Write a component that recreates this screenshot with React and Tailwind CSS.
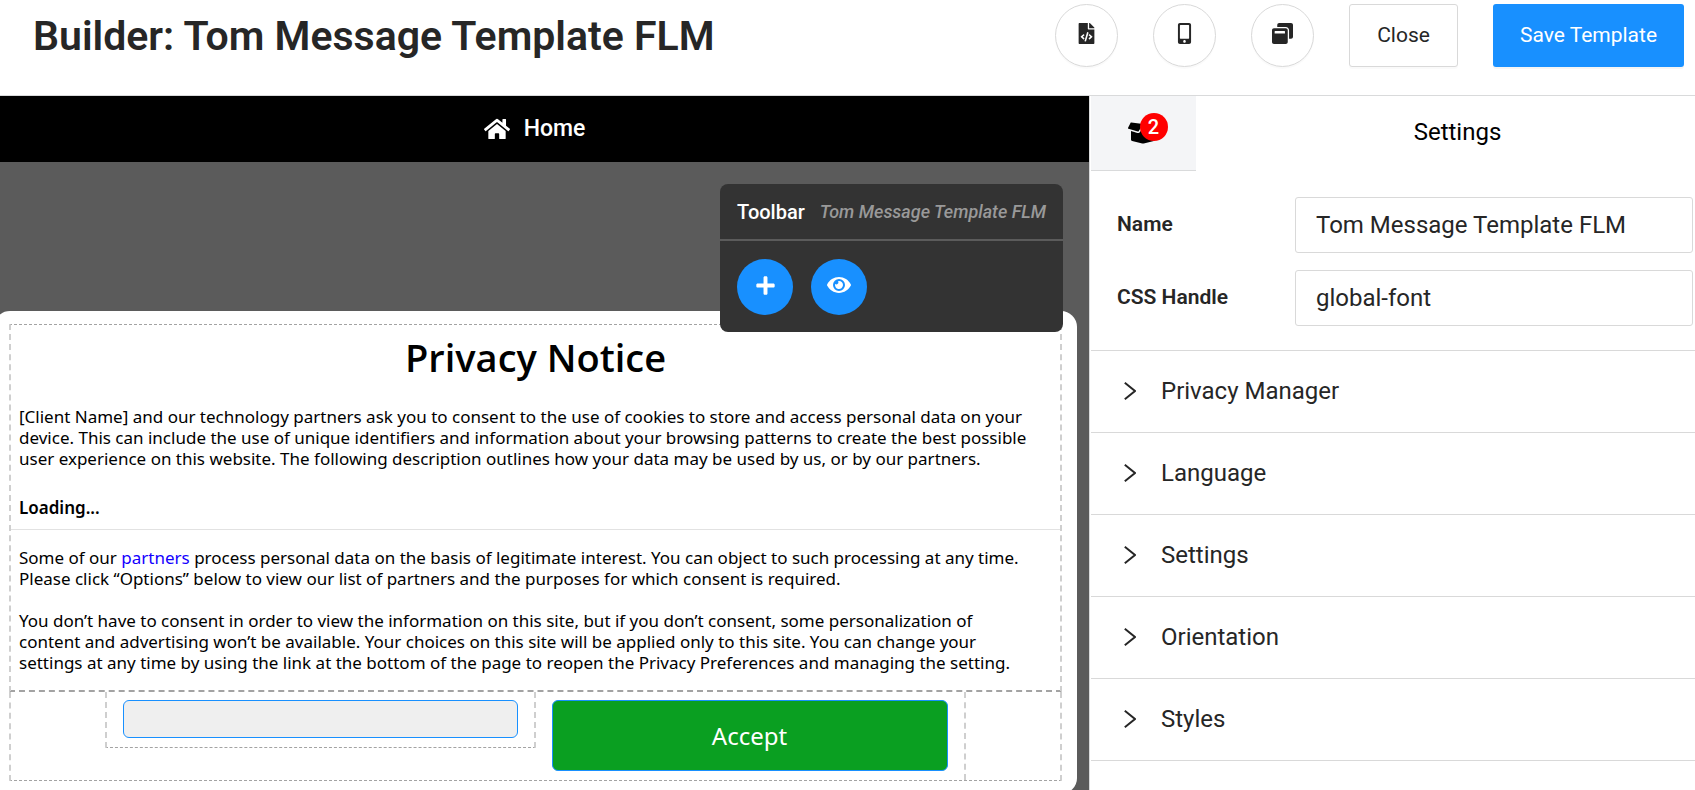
import React from 'react';
import { FaBoxOpen, FaEye, FaFileCode, FaHome, FaMobileAlt, FaPlus, FaWindowRestore } from 'react-icons/fa';

const NAME = 'Tom Message Template FLM';
const SECTIONS = ['Privacy Manager', 'Language', 'Settings', 'Orientation', 'Styles'];

function RoundButton({ label, children }) {
  return (
    <button
      type="button"
      aria-label={label}
      className="flex size-[63px] items-center justify-center rounded-full border border-[#d9d9d9] bg-white pb-1 text-[21px] shadow-[0_2px_0_rgba(0,0,0,0.02)]"
    >
      {children}
    </button>
  );
}

function Header() {
  return (
    <header className="flex items-center justify-between border-b border-[#d9dadb] bg-white pt-1 pr-[11px] pb-7 pl-[33px]">
      <h1 className="text-[41px] leading-[48px] font-semibold">Builder: {NAME}</h1>
      <div className="flex items-center gap-[35px]">
        <RoundButton label="View code"><FaFileCode /></RoundButton>
        <RoundButton label="Mobile preview"><FaMobileAlt /></RoundButton>
        <RoundButton label="Windows"><FaWindowRestore /></RoundButton>
        <button
          type="button"
          className="h-[63px] w-[109px] rounded-[3px] border border-[#d9d9d9] bg-white text-[21px] shadow-[0_2px_0_rgba(0,0,0,0.02)]"
        >
          Close
        </button>
        <button
          type="button"
          className="h-[63px] w-[191px] rounded-[3px] bg-[#1890ff] text-[21px] text-white shadow-[0_2px_0_rgba(0,0,0,0.04)]"
        >
          Save Template
        </button>
      </div>
    </header>
  );
}

function Toolbar() {
  return (
    <div className="absolute top-[22px] right-[26px] overflow-hidden rounded-lg bg-[#333333] text-white">
      <div className="flex h-[57px] items-center gap-[15px] border-b-2 border-[#5b5b5b] px-[17px]">
        <span className="text-[20px] font-medium">Toolbar</span>
        <span className="text-[18px] font-medium text-[#999999] italic">{NAME}</span>
      </div>
      <div className="flex gap-[18px] px-[17px] pt-[18px] pb-[17px]">
        <button type="button" aria-label="Add" className="flex size-14 items-center justify-center rounded-full bg-[#1890ff] pb-1 text-[21px]">
          <FaPlus />
        </button>
        <button type="button" aria-label="Preview" className="flex size-14 items-center justify-center rounded-full bg-[#1890ff] pb-1 text-[24px]">
          <FaEye />
        </button>
      </div>
    </div>
  );
}

function Message() {
  return (
    <div className="mt-[149px] mr-3 -ml-1.5 rounded-2xl bg-white px-[15px] py-[13px] font-['Noto_Sans','Open_Sans',sans-serif] text-[17px] leading-[21px] text-black">
      <section className="border-x-2 border-t border-b-2 border-dashed border-x-[#cfcfcf] border-y-[#a3a3a3] pt-2 pb-[17px]">
        <h2 className="text-center font-['Open_Sans',sans-serif] text-[38px] leading-[48px] font-semibold">Privacy Notice</h2>
        <p className="mt-[25px] px-2">
          [Client Name] and our technology partners ask you to consent to the use of cookies to store and access personal
          data on your device. This can include the use of unique identifiers and information about your browsing
          patterns to create the best possible user experience on this website. The following description outlines how
          your data may be used by us, or by our partners.
        </p>
        <p className="mt-7 border-b border-[#e2e2e2] px-2 pb-[11px] font-semibold">Loading...</p>
        <p className="mt-[17px] px-2">
          Some of our <a href="#partners" className="text-[#1400ff]">partners</a> process personal data on the basis of
          legitimate interest. You can object to such processing at any time. Please click “Options” below to view our
          list of partners and the purposes for which consent is required.
        </p>
        <p className="mt-[21px] pr-9 pl-2">
          You don’t have to consent in order to view the information on this site, but if you don’t consent, some
          personalization of content and advertising won’t be available. Your choices on this site will be applied only
          to this site. You can change your settings at any time by using the link at the bottom of the page to reopen
          the Privacy Preferences and managing the setting.
        </p>
      </section>
      <section className="flex items-start justify-center border-x-2 border-b border-dashed border-x-[#cfcfcf] border-y-[#a3a3a3]">
        <div className="w-[41%] border-x-2 border-b border-dashed border-x-[#cfcfcf] border-y-[#a3a3a3] px-4 pt-2 pb-[9px]">
          <button type="button" aria-label="Options" className="block h-[38px] w-full rounded-md border border-[#1890ff] bg-[#efefef]" />
        </div>
        <div className="w-[41%] border-r-2 border-dashed border-[#cfcfcf] px-4 pt-2 pb-[9px]">
          <button type="button" className="block h-[71px] w-full rounded-md border border-[#1890ff] bg-[#0a9f21] text-[24px] text-white">
            Accept
          </button>
        </div>
      </section>
    </div>
  );
}

function Field({ id, label, value }) {
  return (
    <div className="flex items-center">
      <label htmlFor={id} className="w-[178px] shrink-0 text-[21px] font-semibold">{label}</label>
      <input
        id={id}
        type="text"
        defaultValue={value}
        className="h-14 min-w-0 flex-1 rounded-[3px] border border-[#d9d9d9] bg-white px-5 text-[24px]"
      />
    </div>
  );
}

function SettingsPanel() {
  return (
    <aside className="w-[606px] shrink-0 border-l border-[#d9dadb] bg-white pl-px">
      <div className="flex">
        <button
          type="button"
          aria-label="Components"
          className="flex h-[75px] w-[105px] shrink-0 items-center justify-center border-b border-[#d9dadb] bg-[#f4f5f7] pr-0.5 text-black"
        >
          <span className="relative">
            <FaBoxOpen className="text-[30px]" />
            <span className="absolute -top-[5px] left-3 flex size-7 items-center justify-center rounded-full bg-[#ff0000] text-[20px] font-medium text-white">
              2
            </span>
          </span>
        </button>
        <h2 className="flex flex-1 items-center justify-center pb-1 pl-6 text-[24px] text-black">Settings</h2>
      </div>
      <form className="flex flex-col gap-[17px] pt-[26px] pr-[2px] pb-6 pl-[26px]">
        <Field id="name" label="Name" value={NAME} />
        <Field id="css-handle" label="CSS Handle" value="global-font" />
      </form>
      <ul className="border-t border-[#d9d9d9]">
        {SECTIONS.map((title) => (
          <li key={title} className="border-b border-[#d9d9d9]">
            <button type="button" className="flex h-[81px] w-full items-center gap-[25px] pb-[2px] pl-[33px] text-left text-[24px]">
              <svg viewBox="0 0 12 18" className="mt-px h-[18px] w-3" fill="none" stroke="currentColor" strokeWidth="2">
                <path d="M0.8 0.8 11 9 0.8 17.2" />
              </svg>
              {title}
            </button>
          </li>
        ))}
      </ul>
    </aside>
  );
}

export default function App() {
  return (
    <div className="flex h-screen flex-col overflow-hidden bg-white font-[Roboto,sans-serif] text-[#262626]">
      <Header />
      <div className="flex min-h-0 flex-1">
        <main className="flex min-w-0 flex-1 flex-col bg-[#5b5b5b]">
          <a href="#home" className="flex h-[66px] shrink-0 items-center justify-center gap-[14px] bg-black pr-5 text-[23px] font-medium text-white">
            <FaHome className="text-[26px]" />
            Home
          </a>
          <div className="relative min-h-0 flex-1 overflow-hidden">
            <Message />
            <Toolbar />
          </div>
        </main>
        <SettingsPanel />
      </div>
    </div>
  );
}
